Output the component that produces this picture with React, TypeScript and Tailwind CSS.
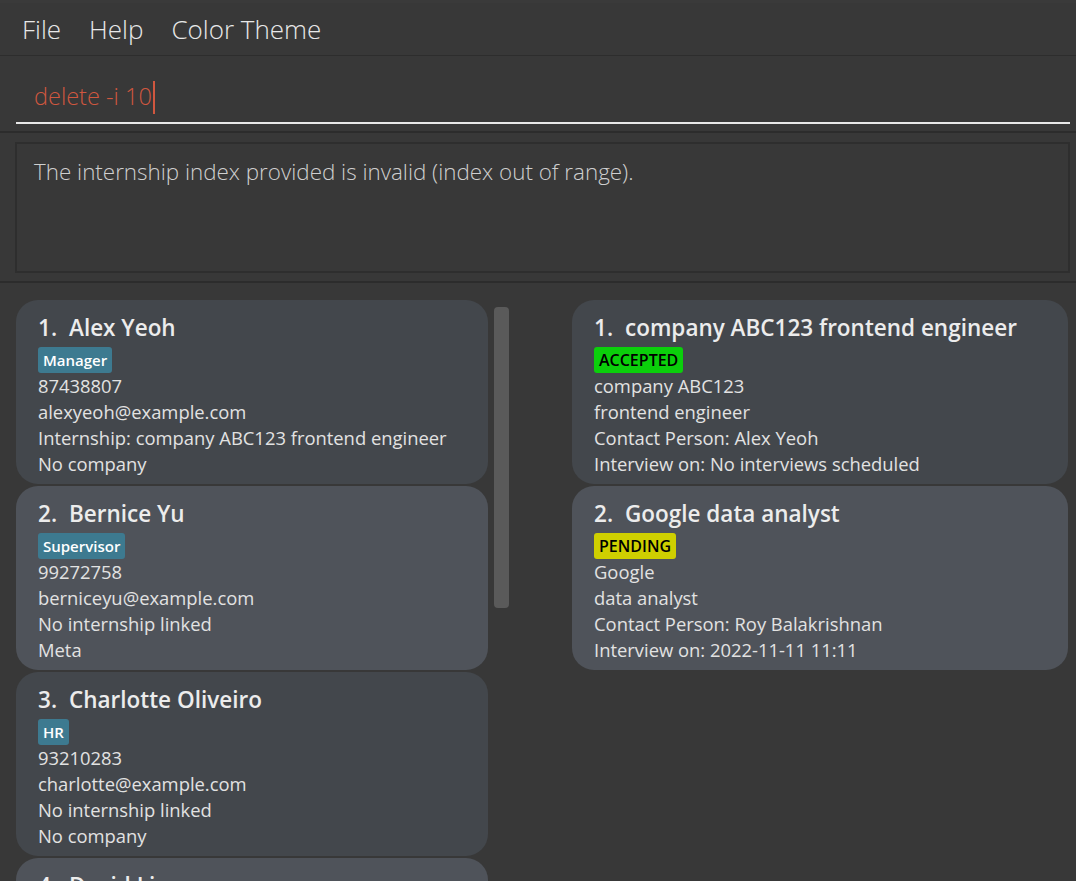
import React from "react";

const font = { fontFamily: '"Open Sans", "Noto Sans", sans-serif' };

type Person = { n: number; name: string; tag: string; lines: string[] };
type Intern = { n: number; title: string; status: "ACCEPTED" | "PENDING"; lines: string[] };

const persons: Person[] = [
  { n: 1, name: "Alex Yeoh", tag: "Manager", lines: ["87438807", "alexyeoh@example.com", "Internship: company ABC123 frontend engineer", "No company"] },
  { n: 2, name: "Bernice Yu", tag: "Supervisor", lines: ["99272758", "berniceyu@example.com", "No internship linked", "Meta"] },
  { n: 3, name: "Charlotte Oliveiro", tag: "HR", lines: ["93210283", "charlotte@example.com", "No internship linked", "No company"] },
  { n: 4, name: "David Li", tag: "HR", lines: ["91031282", "lidavid@example.com", "No internship linked", "No company"] },
];

const interns: Intern[] = [
  { n: 1, title: "company ABC123 frontend engineer", status: "ACCEPTED", lines: ["company ABC123", "frontend engineer", "Contact Person: Alex Yeoh", "Interview on: No interviews scheduled"] },
  { n: 2, title: "Google data analyst", status: "PENDING", lines: ["Google", "data analyst", "Contact Person: Roy Balakrishnan", "Interview on: 2022-11-11 11:11"] },
];

function Card({ idx, title, badge, lines }: { idx: number; title: string; badge: React.ReactNode; lines: string[] }) {
  return (
    <div
      className={`shrink-0 h-[184px] rounded-[22px] pl-[22px] pt-[13px] ${idx % 2 === 1 ? "bg-[#43474c]" : "bg-[#4f535a]"}`}
    >
      <div className="flex items-center h-[30px] text-[22.5px] font-semibold text-[#ececec] leading-[30px] whitespace-nowrap">
        <span className="w-[31px]">{idx}.</span>
        <span>{title}</span>
      </div>
      <div className="flex mt-[4px] h-[26px]">{badge}</div>
      <div className="text-[18.4px] leading-[26px] text-[#e2e2e2] whitespace-nowrap">
        {lines.map((l) => (
          <div key={l}>{l}</div>
        ))}
      </div>
    </div>
  );
}

export default function App() {
  return (
    <div className="w-[1076px] h-[881px] bg-[#383838] overflow-hidden flex flex-col" style={font}>
      {/* top strip */}
      <div className="h-[3px] bg-[#3a3a3a]" />
      {/* menu */}
      <div className="h-[53px] flex items-center pl-[22px] gap-[28px] text-[26px] font-light text-[#e8e8e8] border-b border-[#2d2d2d]">
        <span>File</span>
        <span>Help</span>
        <span>Color Theme</span>
      </div>
      {/* command box */}
      <div className="h-[75px] pt-[12px] pl-[16px] pr-[6px]">
        <div className="h-[56px] border-b-2 border-[#e8e8e8] flex items-center pt-[4px] pl-[18px] text-[23.5px] font-light text-[#d0573f]">
          <span>delete -i 10</span>
          <span className="w-[2px] h-[33px] bg-[#d0573f] ml-[1px]" />
        </div>
      </div>
      <div className="h-[2px] bg-[#2c2c2c]" />
      {/* result */}
      <div className="pt-[9px] pl-[15px] pr-[6px]">
        <div className="h-[131px] border-2 border-[#2e2e2e] pl-[17px] pt-[11px] text-[22.4px] font-light text-[#cfcfcf]">
          The internship index provided is invalid (index out of range).
        </div>
      </div>
      <div className="h-[8px]" />
      <div className="h-[2px] bg-[#2c2c2c]" />
      {/* lists */}
      <div className="flex-1 flex pt-[17px] overflow-hidden">
        <div className="w-[472px] ml-[16px] flex flex-col gap-[2px] shrink-0">
          {persons.map((p) => (
            <Card
              key={p.n}
              idx={p.n}
              title={p.name}
              lines={p.lines}
              badge={
                <span className="h-[26px] px-[5px] rounded-[3px] bg-[#3d7a90] text-white text-[15px] font-semibold leading-[26px]">
                  {p.tag}
                </span>
              }
            />
          ))}
        </div>
        <div className="w-[15px] ml-[6px] shrink-0 pt-[7px]">
          <div className="h-[301px] rounded-[4px] bg-[#5a5a5a]" />
        </div>
        <div className="w-[496px] ml-[63px] flex flex-col gap-[2px] shrink-0">
          {interns.map((i) => (
            <Card
              key={i.n}
              idx={i.n}
              title={i.title}
              lines={i.lines}
              badge={
                <span
                  className={`h-[26px] px-[5px] rounded-[3px] text-black text-[16px] font-semibold leading-[26px] ${
                    i.status === "ACCEPTED" ? "bg-[#0bcf0b]" : "bg-[#cfcf00]"
                  }`}
                >
                  {i.status}
                </span>
              }
            />
          ))}
        </div>
      </div>
    </div>
  );
}
